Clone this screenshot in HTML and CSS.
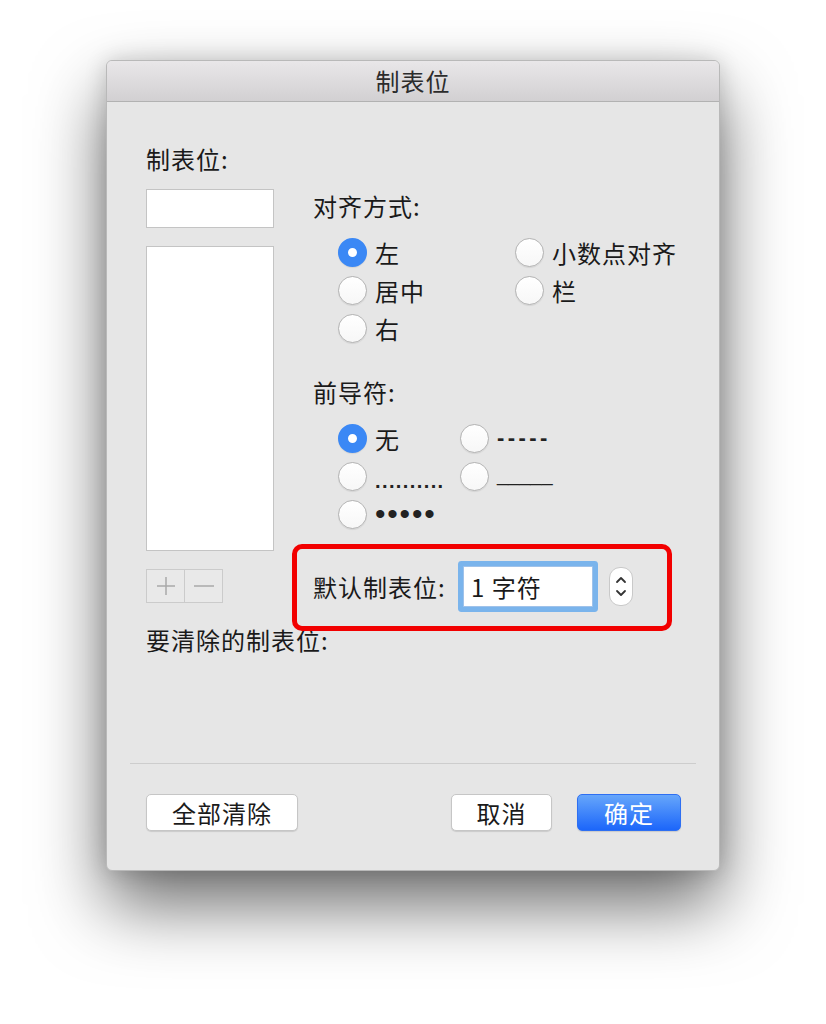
FILE: index.html
```html
<!DOCTYPE html>
<html lang="zh-CN">

<head>
	<meta charset="utf-8">
	<title>制表位</title>
	<link rel="stylesheet" href="styles.css">
</head>

<body>
	<div class="window">
		<div class="titlebar">制表位</div>
		<div class="main">
			<div class="cols">
				<div class="tabcol">
					<div class="label">制表位:</div>
					<div class="field tabstop"></div>
					<div class="field tablist"></div>
					<div class="addremove">
						<span class="seg">
							<svg width="20" height="20" viewBox="0 0 20 20"><path d="M10 1v18M1 10h18" stroke="#a9a9a9" stroke-width="1.5" fill="none"/></svg>
						</span>
						<span class="seg">
							<svg width="20" height="20" viewBox="0 0 20 20"><path d="M0 10h20" stroke="#a9a9a9" stroke-width="1.5" fill="none"/></svg>
						</span>
					</div>
				</div>
				<div class="optcol">
					<div class="label">对齐方式:</div>
					<div class="radios align">
						<div class="radio on"><span class="dot"></span>左</div>
						<div class="radio"><span class="dot"></span>小数点对齐</div>
						<div class="radio"><span class="dot"></span>居中</div>
						<div class="radio"><span class="dot"></span>栏</div>
						<div class="radio"><span class="dot"></span>右</div>
					</div>
					<div class="label leader-label">前导符:</div>
					<div class="radios leader">
						<div class="radio on"><span class="dot"></span>无</div>
						<div class="radio"><span class="dot"></span><span class="ld dashes">-----</span></div>
						<div class="radio"><span class="dot"></span><span class="ld dots">..........</span></div>
						<div class="radio"><span class="dot"></span><span class="ld under">_____</span></div>
						<div class="radio"><span class="dot"></span><span class="ld bullets">•••••</span></div>
					</div>
					<div class="deftab">
						<span class="deftab-label">默认制表位:</span>
						<div class="numfield">1 字符</div>
						<div class="stepper">
							<svg width="24" height="39" viewBox="0 0 24 39">
								<path d="M8 15l4-4 4 4M8 24l4 4 4-4" stroke="#333" stroke-width="1.8" fill="none" stroke-linecap="round" stroke-linejoin="round"/>
							</svg>
						</div>
					</div>
				</div>
			</div>
			<div class="label clear-label">要清除的制表位:</div>
		</div>
		<div class="sep"></div>
		<div class="footer">
			<button type="button" class="btn clearall">全部清除</button>
			<span class="grow"></span>
			<button type="button" class="btn cancel">取消</button>
			<button type="button" class="btn ok">确定</button>
		</div>
	</div>
</body>

</html>
```

FILE: styles.css
```css
html {
	background: #fff;
}

body {
	margin: 0;
	min-height: 1024px;
	padding-top: 60px;
	box-sizing: border-box;
	font-family: "Noto Sans CJK SC", sans-serif;
	color: #1a1a1a;
}

.window {
	box-sizing: border-box;
	width: 614px;
	height: 811px;
	margin: 0 0 0 106px;
	background: #e6e6e6;
	border: 1px solid #b9b9b9;
	border-radius: 6px;
	box-shadow: 0 34px 70px rgba(0, 0, 0, 0.58), 0 0 22px rgba(0, 0, 0, 0.16);
	display: flex;
	flex-direction: column;
}

.titlebar {
	height: 40px;
	line-height: 40px;
	text-align: center;
	font-size: 24px;
	letter-spacing: 1px;
	color: #2c2c2c;
	background: linear-gradient(#e9e7e9, #d2d0d2);
	border-bottom: 1px solid #b2b2b2;
	border-radius: 5px 5px 0 0;
}

.main {
	padding: 0 23px 0 39px;
}

.cols {
	display: flex;
	gap: 39px;
	padding-top: 45px;
}

.label {
	font-size: 24px;
	letter-spacing: 1px;
	line-height: 24px;
	white-space: nowrap;
}

/* left column: tab stop list */
.tabcol {
	width: 128px;
	flex: 0 0 128px;
}

.field {
	box-sizing: border-box;
	background: #fff;
	border: 1px solid #c4c4c4;
}

.tabstop {
	height: 39px;
	margin-top: 18px;
}

.tablist {
	height: 305px;
	margin-top: 18px;
}

.addremove {
	display: flex;
	width: 77px;
	height: 34px;
	margin-top: 18px;
	box-sizing: border-box;
	border: 1px solid #cbcbcb;
	background: #e9e9e9;
}

.addremove .seg {
	flex: 1;
	display: flex;
	align-items: center;
	justify-content: center;
}

.addremove .seg+.seg {
	border-left: 1px solid #cbcbcb;
}

/* right column: options */
.optcol {
	flex: 1;
	padding-top: 47px;
}

.radios {
	display: grid;
	grid-auto-rows: 38px;
	margin-top: 15px;
	padding-left: 25px;
}

.radios.align {
	grid-template-columns: 177px auto;
}

.radios.leader {
	grid-template-columns: 122px auto;
}

.radio {
	display: flex;
	align-items: center;
	font-size: 24px;
	letter-spacing: 1px;
	white-space: nowrap;
}

.dot {
	box-sizing: border-box;
	width: 29px;
	height: 29px;
	margin-right: 8px;
	border-radius: 50%;
	border: 1px solid #b3b3b3;
	background: linear-gradient(#fff, #f7f7f7);
	box-shadow: 0 1px 1px rgba(0, 0, 0, 0.08);
	flex: none;
}

.radio.on .dot {
	border: 10px solid #3b88f5;
	background: #fff;
}

.leader-label {
	margin-top: 33px;
}

.ld {
	font-family: "Liberation Sans", sans-serif;
	color: #222;
}

.dashes {
	font-size: 22px;
	font-weight: bold;
	letter-spacing: 3.4px;
}

.dots {
	font-size: 20px;
	letter-spacing: 1.4px;
	font-weight: bold;
	padding-top: 10px;
}

.under {
	font-size: 20px;
	letter-spacing: 0;
	padding-bottom: 4px;
}

.bullets {
	font-size: 30px;
	letter-spacing: 1.8px;
}

.deftab {
	position: relative;
	display: flex;
	align-items: center;
	height: 54px;
	margin-top: 26px;
}

/* red annotation frame drawn over the row */
.deftab::after {
	content: "";
	position: absolute;
	left: -21px;
	top: -15px;
	right: 24px;
	bottom: -18px;
	border: 5px solid #f20000;
	border-radius: 10px;
	pointer-events: none;
}

.deftab-label {
	flex: 0 0 150px;
	font-size: 24px;
	letter-spacing: 1px;
	white-space: nowrap;
}

.numfield {
	box-sizing: border-box;
	width: 130px;
	height: 41px;
	line-height: 39px;
	padding-left: 7px;
	font-size: 24px;
	letter-spacing: 1px;
	background: #fff;
	border: 1px solid #9fc2ea;
	border-radius: 1px;
	box-shadow: 0 0 0 5px #7ab4ec;
}

.stepper {
	box-sizing: border-box;
	width: 24px;
	height: 39px;
	margin-left: 16px;
	background: #fff;
	border: 1px solid #c9c9c9;
	border-radius: 11px;
	display: flex;
	align-items: center;
	justify-content: center;
	overflow: hidden;
}

.stepper svg {
	flex: none;
}

.clear-label {
	margin-top: 15px;
}

.sep {
	height: 1px;
	background: #cdcdcd;
	margin: 111px 23px 0 23px;
}

.footer {
	display: flex;
	align-items: center;
	padding: 30px 38px 0 39px;
}

.grow {
	flex: 1;
}

.btn {
	box-sizing: border-box;
	height: 37px;
	font-family: "Noto Sans CJK SC", sans-serif;
	font-size: 24px;
	letter-spacing: 1px;
	color: #1a1a1a;
	background: #fff;
	border: 1px solid #c6c6c6;
	border-radius: 5px;
	box-shadow: 0 1px 1px rgba(0, 0, 0, 0.12);
	padding: 0;
	cursor: pointer;
	line-height: 35px;
}

.clearall {
	width: 152px;
}

.cancel {
	width: 101px;
	margin-right: 25px;
}

.ok {
	width: 104px;
	color: #fff;
	border-color: #2e6ff2;
	background: linear-gradient(#66a6fb, #1c66fa);
}
```
